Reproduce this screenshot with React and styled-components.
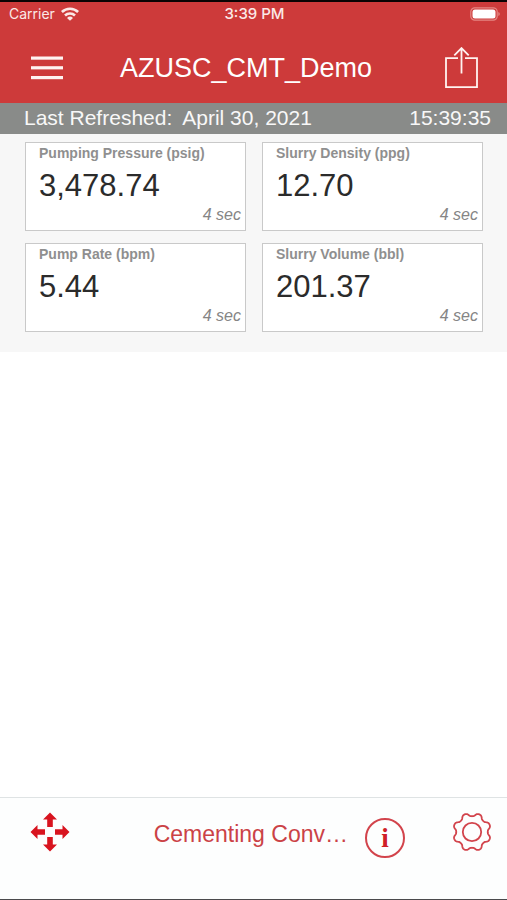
import React from "react";
import styled, { createGlobalStyle } from "styled-components";

const GlobalStyle = createGlobalStyle`
    * {
        box-sizing: border-box;
    }
    body {
        margin: 0;
        background-color: #ffffff;
        font-family: "Liberation Sans", Arial, sans-serif;
    }
`

const Page = styled.div`
    display: flex;
    flex-direction: column;
    min-height: 100vh;
    border-top: 2px solid #0a0303;
    border-bottom: 1px solid #4a4a4c;
`

const Header = styled.header`
    background-color: #cd3a3a;
    color: #ffffff;
`

const StatusBar = styled.div`
    display: grid;
    grid-template-columns: 1fr auto 1fr;
    align-items: center;
    height: 24px;
    padding: 0 7px 0 9px;
    font-family: Inter, "Liberation Sans", sans-serif;
    font-size: 14px;
    line-height: 20px;
    color: #fbe9e7;
`

const Carrier = styled.div`
    display: flex;
    align-items: center;
    gap: 6px;
`

const Clock = styled.time`
    font-size: 15px;
    font-weight: 500;
`

const Battery = styled.div`
    display: flex;
    justify-content: flex-end;
`

const NavBar = styled.nav`
    display: flex;
    align-items: center;
    height: 77px;
    padding-top: 6px;
`

const IconButton = styled.button`
    display: flex;
    flex: none;
    margin: 0;
    padding: ${props => props.$padding || "0"};
    border: 0;
    background: none;
    color: inherit;
    cursor: pointer;
`

const Title = styled.h1`
    flex: 1;
    min-width: 0;
    margin: 0;
    overflow: hidden;
    font-size: 27px;
    font-weight: 400;
    line-height: 36px;
    text-align: center;
    text-overflow: ellipsis;
    white-space: nowrap;
`

const RefreshBar = styled.div`
    display: flex;
    justify-content: space-between;
    padding: 0 16px 1px 24px;
    background-color: #898b89;
    color: #f8f8f8;
    font-size: 21px;
    line-height: 30px;
`

const Refreshed = styled.div`
    display: flex;
    gap: 10px;
`

const Board = styled.main`
    display: grid;
    grid-template-columns: 1fr 1fr;
    gap: 12px 16px;
    padding: 8px 24px 20px 25px;
    background-color: #f7f7f7;
`

const Card = styled.section`
    display: flex;
    flex-direction: column;
    height: 89px;
    padding: 2px 4px 0 13px;
    border: 1px solid #c9c9c9;
    background-color: #ffffff;
`

const Label = styled.h2`
    margin: 0;
    color: #8f8f8f;
    font-size: 14px;
    font-weight: 700;
    line-height: 16px;
    white-space: nowrap;
`

const Value = styled.div`
    margin-top: 6px;
    color: #2b2b2b;
    font-size: 31px;
    line-height: 38px;
`

const Age = styled.div`
    align-self: flex-end;
    color: #858585;
    font-size: 16px;
    font-style: italic;
    line-height: 20px;
`

const Footer = styled.footer`
    display: flex;
    align-items: flex-start;
    height: 102px;
    margin-top: auto;
    padding: 14px 15px 0 30px;
    border-top: 1px solid #dfe3e4;
    background-color: #fdfefe;
    color: #d8141f;
`

const Screen = styled.div`
    display: flex;
    flex: 1;
    align-items: flex-start;
    justify-content: flex-end;
    gap: 17px;
    min-width: 0;
    padding: 6px 47px 0 16px;
`

const ScreenName = styled.span`
    overflow: hidden;
    color: #cb4246;
    font-size: 23px;
    line-height: 32px;
    text-overflow: ellipsis;
    white-space: nowrap;
`

const InfoButton = styled.button`
    flex: none;
    width: 40px;
    height: 40px;
    padding: 0;
    border: 2px solid #d2444c;
    border-radius: 50%;
    background: none;
    color: #cf1f28;
    font-family: "Liberation Serif", serif;
    font-size: 27px;
    font-weight: 700;
    line-height: 36px;
    cursor: pointer;
`

const readings = [
    { label: "Pumping Pressure (psig)", value: "3,478.74", age: "4 sec" },
    { label: "Slurry Density (ppg)", value: "12.70", age: "4 sec" },
    { label: "Pump Rate (bpm)", value: "5.44", age: "4 sec" },
    { label: "Slurry Volume (bbl)", value: "201.37", age: "4 sec" },
];

// eight rounded teeth, with a valley at the top
const gearOutline = () => {
    const points = [];
    for (let i = 0; i < 192; i++) {
        const a = (i / 192) * Math.PI * 2;
        const wave = Math.cos(8 * a);
        const r = 17.4 - 1.9 * Math.tanh(1.3 * wave);
        points.push(`${(20 + r * Math.sin(a)).toFixed(2)} ${(20 - r * Math.cos(a)).toFixed(2)}`);
    }
    return `M${points.join("L")}Z`;
};

const WifiIcon = () => (
    <svg width="18" height="14" viewBox="0 0 18 14" fill="none" stroke="currentColor" strokeWidth="2.6">
        <path d="M0.9 5A11.6 11.6 0 0 1 17.1 5" />
        <path d="M4 8.5A7.2 7.2 0 0 1 14 8.5" />
        <path d="M9 13.8L6 10.9A4.3 4.3 0 0 1 12 10.9Z" fill="currentColor" stroke="none" />
    </svg>
);

const BatteryIcon = () => (
    <svg width="30" height="14" viewBox="0 0 30 14">
        <rect x="0.8" y="0.8" width="26.4" height="12.4" rx="4" fill="none" stroke="#e58783" strokeWidth="1.2" />
        <rect x="2.5" y="2.5" width="23" height="9" rx="2.5" fill="#ffffff" />
        <path d="M28.3 5V9Q29.8 8.4 29.8 7T28.3 5Z" fill="#e58783" />
    </svg>
);

const MenuIcon = () => (
    <svg width="32" height="24" viewBox="0 0 32 24" fill="#fff3f1">
        <rect y="0.5" width="32" height="3.2" />
        <rect y="10.2" width="32" height="3.2" />
        <rect y="20" width="32" height="3.2" />
    </svg>
);

const ShareIcon = () => (
    <svg width="33" height="42" viewBox="0 0 33 42" fill="none" stroke="#fff3f1" strokeWidth="1.8">
        <path d="M13 11.2H1V40.2H32V11.2H20" />
        <path d="M16.5 26.4V1.3M9.3 8.3L16.5 1.1L23.7 8.3" />
    </svg>
);

const MoveIcon = () => (
    <svg width="40" height="40" viewBox="0 0 40 40" fill="currentColor">
        {[0, 90, 180, 270].map(angle => (
            <path key={angle} d="M20 0.5L27 7.5H22.8V15H17.2V7.5H13Z" transform={`rotate(${angle} 20 20)`} />
        ))}
    </svg>
);

const GearIcon = () => (
    <svg width="40" height="40" viewBox="0 0 40 40" fill="none" stroke="#d2444c" strokeWidth="1.8">
        <path d={gearOutline()} strokeLinejoin="round" />
        <circle cx="20" cy="20" r="9.2" />
    </svg>
);

const App = () => {
    return (
        <Page>
            <GlobalStyle />
            <Header>
                <StatusBar>
                    <Carrier>
                        <span>Carrier</span>
                        <WifiIcon />
                    </Carrier>
                    <Clock>3:39 PM</Clock>
                    <Battery>
                        <BatteryIcon />
                    </Battery>
                </StatusBar>
                <NavBar>
                    <IconButton aria-label="Menu" $padding="8px 2px 8px 31px">
                        <MenuIcon />
                    </IconButton>
                    <Title>AZUSC_CMT_Demo</Title>
                    <IconButton aria-label="Share" $padding="0 29px 0 18px">
                        <ShareIcon />
                    </IconButton>
                </NavBar>
            </Header>
            <RefreshBar>
                <Refreshed>
                    <span>Last Refreshed:</span>
                    <time>April 30, 2021</time>
                </Refreshed>
                <time>15:39:35</time>
            </RefreshBar>
            <Board>
                {readings.map(reading => (
                    <Card key={reading.label}>
                        <Label>{reading.label}</Label>
                        <Value>{reading.value}</Value>
                        <Age>{reading.age}</Age>
                    </Card>
                ))}
            </Board>
            <Footer>
                <IconButton aria-label="Move">
                    <MoveIcon />
                </IconButton>
                <Screen>
                    <ScreenName>Cementing Conv…</ScreenName>
                    <InfoButton aria-label="Information">i</InfoButton>
                </Screen>
                <IconButton aria-label="Settings">
                    <GearIcon />
                </IconButton>
            </Footer>
        </Page>
    );
};

export default App;
